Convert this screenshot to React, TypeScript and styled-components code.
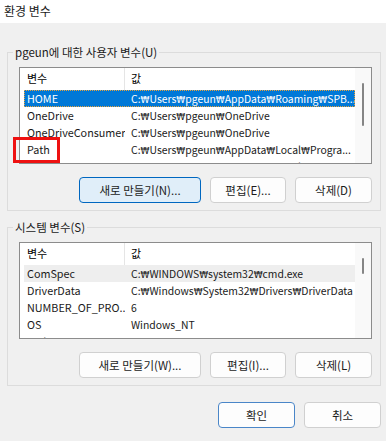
import styled, { createGlobalStyle } from 'styled-components';

type Row = { name: string; value: string };

const userRows: Row[] = [
  { name: 'HOME', value: 'C:₩Users₩pgeun₩AppData₩Roaming₩SPB...' },
  { name: 'OneDrive', value: 'C:₩Users₩pgeun₩OneDrive' },
  { name: 'OneDriveConsumer', value: 'C:₩Users₩pgeun₩OneDrive' },
  { name: 'Path', value: 'C:₩Users₩pgeun₩AppData₩Local₩Progra...' },
  { name: 'TEMP', value: 'C:₩Users₩pgeun₩AppData₩Local₩Temp' },
];

const systemRows: Row[] = [
  { name: 'ComSpec', value: 'C:₩WINDOWS₩system32₩cmd.exe' },
  { name: 'DriverData', value: 'C:₩Windows₩System32₩Drivers₩DriverData' },
  { name: 'NUMBER_OF_PRO...', value: '6' },
  { name: 'OS', value: 'Windows_NT' },
  { name: 'Path', value: 'C:₩WINDOWS₩system32;C:₩WINDOWS;C:₩...' },
];

const FONT = `"Noto Sans CJK KR", sans-serif`;

const GlobalStyle = createGlobalStyle`
  body {
    margin: 0;
    background: #f0f0f0;
    font-family: ${FONT};
    font-size: 11.5px;
    color: #000;
  }
`;

// the Korean code page shows the backslash as a narrow won sign
function PathText({ text }: { text: string }) {
  const parts = text.split('₩');
  return (
    <>
      {parts.map((part, i) => (
        <span key={i}>
          {i > 0 && <Won>₩</Won>}
          {part}
        </span>
      ))}
    </>
  );
}

interface ListProps {
  rows: Row[];
  selected: number;
  active: boolean;
  thumbTop: number;
  thumbHeight: number;
  markRow?: boolean;
}

function VarList({ rows, selected, active, thumbTop, thumbHeight, markRow }: ListProps) {
  return (
    <ListBox>
      <ListBody>
        <HeaderRow>
          <HeadCell>변수</HeadCell>
          <HeadValue>값</HeadValue>
        </HeaderRow>
        {rows.map((row, i) => (
          <ListRow key={row.name + i} $selected={i === selected} $active={active}>
            <NameCell>{row.name}</NameCell>
            <ValueCell>
              <PathText text={row.value} />
            </ValueCell>
          </ListRow>
        ))}
      </ListBody>
      <ScrollTrack>
        <Thumb style={{ marginTop: thumbTop, height: thumbHeight }} />
      </ScrollTrack>
      {markRow && <Highlight />}
    </ListBox>
  );
}

export default function App() {
  return (
    <>
      <GlobalStyle />
      <Window>
        <TitleBar>환경 변수</TitleBar>
        <Content>
          <Group>
            <Legend>pgeun에 대한 사용자 변수(U)</Legend>
            <VarList rows={userRows} selected={0} active thumbTop={15} thumbHeight={43} markRow />
            <ButtonRow>
              <Button $width={122} $primary>새로 만들기(N)...</Button>
              <Button $width={76}>편집(E)...</Button>
              <Button $width={77}>삭제(D)</Button>
            </ButtonRow>
          </Group>
          <Group $gap={9}>
            <Legend>시스템 변수(S)</Legend>
            <VarList rows={systemRows} selected={0} active={false} thumbTop={15} thumbHeight={16} />
            <ButtonRow>
              <Button $width={122}>새로 만들기(W)...</Button>
              <Button $width={76}>편집(I)...</Button>
              <Button $width={77}>삭제(L)</Button>
            </ButtonRow>
          </Group>
          <Footer>
            <Button $width={77} $focus>확인</Button>
            <Button $width={77}>취소</Button>
          </Footer>
        </Content>
      </Window>
    </>
  );
}

const Window = styled.div`
  width: 386px;
  height: 441px;
  display: flex;
  flex-direction: column;
  background: #f0f0f0;
  overflow: hidden;
`;

const TitleBar = styled.div`
  height: 23px;
  line-height: 22px;
  padding-left: 4px;
  background: #ffffff;
  font-size: 12px;
  color: #1a1a1a;
`;

const Content = styled.div`
  padding: 22px 5px 0 7px;
  display: flex;
  flex-direction: column;
`;

const Group = styled.fieldset<{ $gap?: number }>`
  margin: ${({ $gap }) => $gap ?? 0}px 0 0 0;
  padding: 0 8px 7px 11px;
  min-width: 0;
  border: 1px solid #dcdcdc;
`;

const Legend = styled.legend`
  margin-left: -6px;
  padding: 0 2px;
  line-height: 14px;
  font-size: 11.5px;
  color: #1a1a1a;
`;

const ListBox = styled.div`
  position: relative;
  margin-top: 8px;
  height: 97px;
  box-sizing: border-box;
  border: 1px solid #8c8c8c;
  background: #ffffff;
  display: flex;
`;

const ListBody = styled.div`
  flex: 1;
  min-width: 0;
  overflow: hidden;
  padding-left: 4px;
  font-size: 10.8px;
`;

const HeaderRow = styled.div`
  display: flex;
  height: 22px;
  line-height: 21px;
  font-size: 11px;
`;

const HeadCell = styled.div`
  width: 101px;
  box-sizing: border-box;
  padding-left: 3px;
  border-right: 1px solid #e5e5e5;
`;

const HeadValue = styled.div`
  padding-left: 6px;
`;

const ListRow = styled.div<{ $selected?: boolean; $active?: boolean }>`
  display: flex;
  height: 17px;
  line-height: 17px;
  white-space: nowrap;
  background: ${({ $selected, $active }) =>
    $selected ? ($active ? '#0078d7' : '#eeeeee') : 'transparent'};
  color: ${({ $selected, $active }) => ($selected && $active ? '#ffffff' : '#1a1a1a')};
  outline: ${({ $selected, $active }) => ($selected && $active ? '1px dotted #e8a33c' : 'none')};
  outline-offset: -1px;
`;

const NameCell = styled.div`
  width: 101px;
  flex-shrink: 0;
  box-sizing: border-box;
  padding-left: 3px;
  overflow: hidden;
`;

const ValueCell = styled.div`
  padding-left: 6px;
  overflow: hidden;
  font-size: 10.4px;
`;

const Won = styled.span`
  font-family: "DejaVu Sans", sans-serif;
  font-size: 9px;
`;

const ScrollTrack = styled.div`
  width: 16px;
  flex-shrink: 0;
  background: #f9f9f9;
  display: flex;
  flex-direction: column;
  align-items: center;
`;

const Thumb = styled.div`
  width: 2px;
  border-radius: 1px;
  background: #858585;
`;

const Highlight = styled.div`
  position: absolute;
  left: -7px;
  top: 69px;
  width: 47px;
  height: 26px;
  box-sizing: border-box;
  border: 3px solid #ee1111;
`;

const ButtonRow = styled.div`
  display: flex;
  justify-content: flex-end;
  gap: 9px;
  margin-top: 13px;
`;

const Footer = styled.div`
  display: flex;
  justify-content: flex-end;
  gap: 9px;
  margin-top: 16px;
`;

const Button = styled.button<{ $width: number; $primary?: boolean; $focus?: boolean }>`
  width: ${({ $width }) => $width}px;
  height: 26px;
  padding: 0;
  border-radius: 4px;
  font-family: ${FONT};
  font-size: 11.5px;
  color: #1b1b1b;
  background: ${({ $primary }) => ($primary ? '#e0eef9' : '#fdfdfd')};
  border: 1px solid ${({ $primary, $focus }) => ($primary ? '#0067c0' : $focus ? '#4a86c8' : '#d0d0d0')};
`;
